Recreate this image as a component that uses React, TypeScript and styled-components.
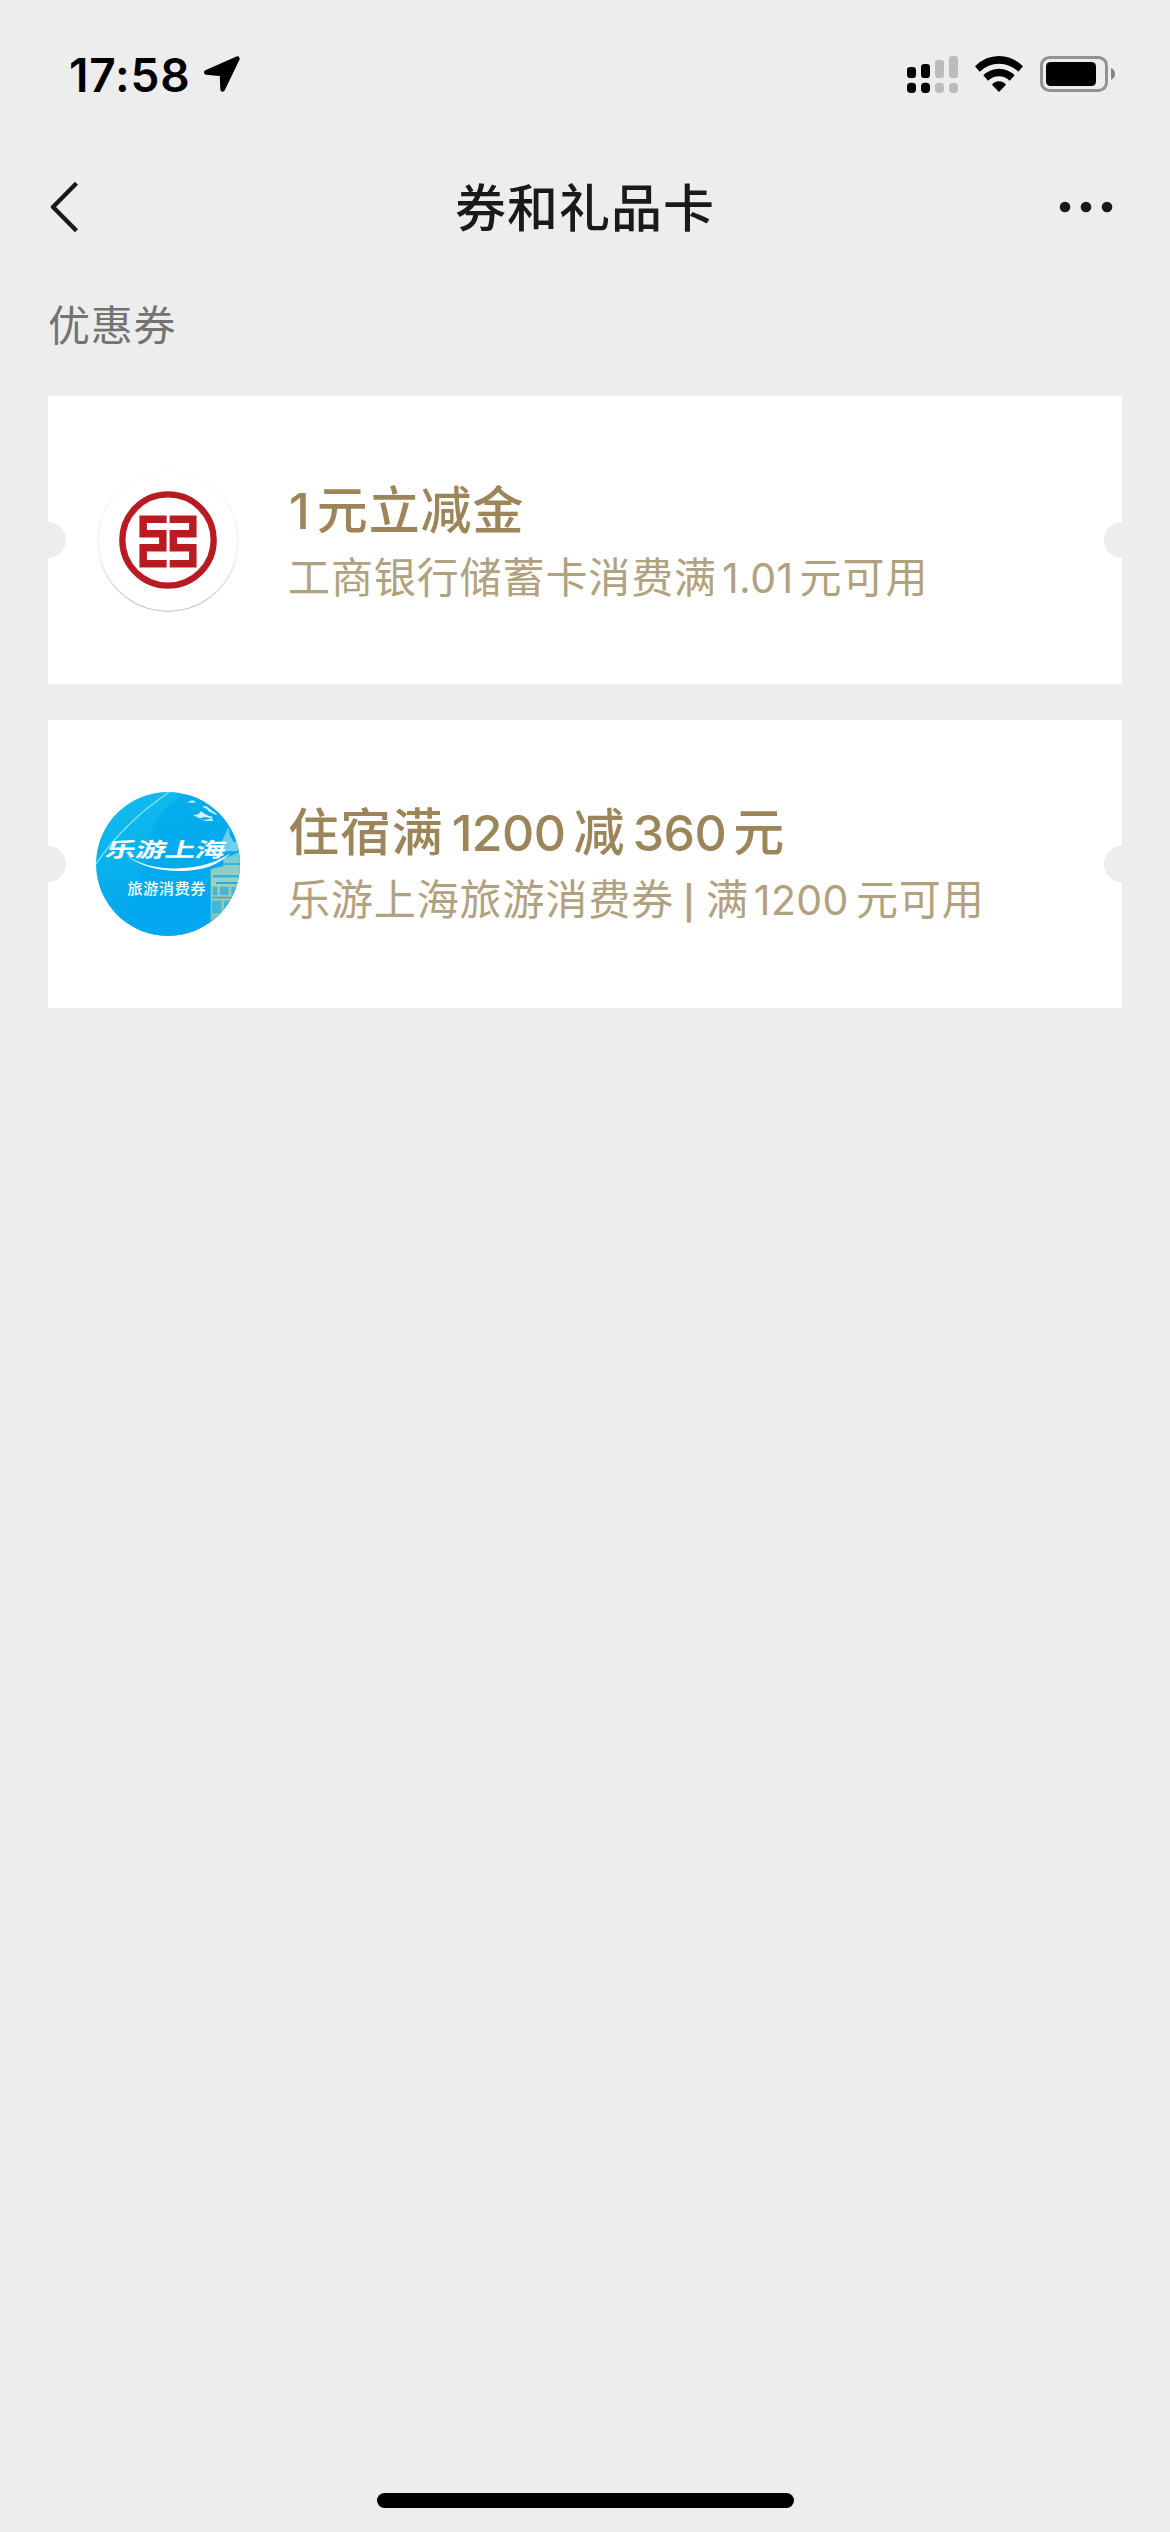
import React from "react";
import styled, { createGlobalStyle } from "styled-components";

const GlobalStyle = createGlobalStyle`
  body { margin: 0; background: #ededed; }
  * { box-sizing: border-box; }
`;

const Screen = styled.div`
  width: 1170px;
  height: 2532px;
  display: flex;
  flex-direction: column;
  overflow: hidden;
  background: #ededed;
  font-family: "Inter", "Noto Sans CJK SC", sans-serif;
`;

const StatusBar = styled.header`
  height: 148px;
  flex: none;
  display: flex;
  justify-content: space-between;
  align-items: center;
  padding: 0 55px 0 69px;
`;

const StatusGroup = styled.div<{ $gap: number }>`
  display: flex;
  align-items: center;
  gap: ${(p) => p.$gap}px;
`;

const Clock = styled.span`
  padding-top: 2px;
  font-size: 46px;
  line-height: 50px;
  font-weight: 600;
  letter-spacing: 0.8px;
  color: #000;
`;

const NavBar = styled.nav`
  height: 118px;
  flex: none;
  display: grid;
  grid-template-columns: 120px 1fr 120px;
  align-items: center;
`;

const NavButton = styled.button<{ $end?: boolean }>`
  height: 100%;
  display: flex;
  align-items: center;
  justify-content: ${(p) => (p.$end ? "flex-end" : "flex-start")};
  padding: 0 ${(p) => (p.$end ? 57 : 50)}px;
  border: 0;
  background: none;
`;

const NavTitle = styled.h1`
  margin: 0;
  padding-top: 3px;
  text-align: center;
  font-size: 51px;
  line-height: 72px;
  font-weight: 500;
  letter-spacing: 1px;
  color: #1a1a1a;
`;

const SectionLabel = styled.h2`
  margin: 0;
  height: 130px;
  padding: 30px 48px 0;
  font-size: 42px;
  line-height: 60px;
  font-weight: 400;
  letter-spacing: 0.7px;
  color: #737373;
`;

const CouponList = styled.main`
  flex: 1;
  display: flex;
  flex-direction: column;
  gap: 36px;
  padding: 0 48px;
`;

const Coupon = styled.article`
  height: 288px;
  display: flex;
  align-items: center;
  gap: 48px;
  padding-left: 48px;
  background:
    radial-gradient(circle at 0 50%, #ededed 17.6px, transparent 18.4px),
    radial-gradient(circle at 100% 50%, #ededed 17.6px, transparent 18.4px),
    #fff;
`;

const Badge = styled.div`
  width: 144px;
  height: 144px;
  flex: none;
  border-radius: 50%;
  overflow: hidden;
`;

const CouponText = styled.div`
  display: flex;
  flex-direction: column;
  padding-top: 3px;
  white-space: nowrap;
`;

const CouponTitle = styled.h3`
  margin: 0;
  font-size: 51px;
  line-height: 72px;
  font-weight: 500;
  letter-spacing: 0.9px;
  color: #9c8558;
`;

const CouponNote = styled.p`
  margin: 0;
  font-size: 42px;
  line-height: 62px;
  letter-spacing: 0.9px;
  color: #b2a17e;
`;

const Figure = styled.span<{ $size: number; $before?: number; $after?: number; $track?: number }>`
  font-size: ${(p) => p.$size}px;
  letter-spacing: ${(p) => p.$track ?? 0}px;
  margin-left: ${(p) => p.$before ?? 0}px;
  margin-right: ${(p) => p.$after ?? 0}px;
`;

const Divider = styled.span`
  margin: 0 11px 0 9px;
  font-size: 33px;
  font-weight: 600;
  letter-spacing: 0;
`;

const HomeArea = styled.footer`
  height: 39px;
  flex: none;
  display: flex;
  justify-content: center;
`;

const HomeIndicator = styled.div`
  width: 417px;
  height: 15px;
  border-radius: 8px;
  background: #000;
`;

const Art = styled.svg`
  display: block;
  flex: none;
`;

const LocationArrow = () => (
  <Art width="36" height="36" viewBox="0 0 108 108">
    <path
      d="M7 49 100 8 56 100 54 54Z"
      fill="#000"
      stroke="#000"
      strokeWidth="14"
      strokeLinejoin="round"
    />
  </Art>
);

const Signal = () => (
  <Art width="51" height="37" viewBox="81 78 153 111">
    {[111, 102, 90, 78].map((top, i) => (
      <g key={top} fill={i < 2 ? "#000" : "#bcbcbc"}>
        <rect x={81 + i * 42} y={top} width="27" height={144 - top} rx="10" />
        <rect x={81 + i * 42} y="158" width="27" height="31" rx="11" />
      </g>
    ))}
  </Art>
);

const Wifi = () => (
  <Art width="48" height="36" viewBox="285 75 144 108">
    <path d="M285 106Q316 75 357 75T429 106L415 122Q390 98 357 98T299 122Z" />
    <path d="M310 133Q330 113 357 113T404 133L389 149Q375 136 357 136T324 149Z" />
    <path d="M336 161Q345 151 357 151T378 161L357 183Z" />
  </Art>
);

const Battery = () => (
  <Art width="75" height="36" viewBox="480 78 225 108">
    <rect x="484.5" y="82.5" width="195" height="99" rx="24" fill="none" stroke="#929292" strokeWidth="9" />
    <rect x="498" y="96" width="150" height="72" rx="13" />
    <path d="M693 114Q705 119 705 132T693 149Z" fill="#858585" />
  </Art>
);

const BackIcon = () => (
  <Art width="30" height="52" viewBox="0 0 30 52">
    <path d="M26.5 2.3 3 26 26.5 49.7" fill="none" stroke="#1a1a1a" strokeWidth="4.4" strokeLinejoin="round" />
  </Art>
);

const MoreIcon = () => (
  <Art width="54" height="12" viewBox="0 0 54 12" fill="#1a1a1a">
    <circle cx="6" cy="6" r="5.3" />
    <circle cx="27" cy="6" r="5.3" />
    <circle cx="48" cy="6" r="5.3" />
  </Art>
);

const BankLogo = () => (
  <Art width="144" height="144" viewBox="168 84 432 432">
    <defs>
      <linearGradient id="rim" x1="0" y1="0" x2="0" y2="1">
        <stop offset="0" stopColor="#fbfbfb" />
        <stop offset=".6" stopColor="#f0f0f0" />
        <stop offset="1" stopColor="#c8c8c8" />
      </linearGradient>
    </defs>
    <circle cx="384" cy="304" r="210" fill="#fff" stroke="url(#rim)" strokeWidth="4" />
    <g fill="none" stroke="#b81c22">
      <circle cx="384" cy="300" r="137" strokeWidth="19" />
      <path
        d="M380 237.5H309.5V281H368.5V323.5H309.5V371H380M389 237.5H458.5V281H400V323.5H458.5V371H389"
        strokeWidth="22.5"
      />
    </g>
  </Art>
);

const TravelLogo = () => (
  <Art width="144" height="144" viewBox="48 36 432 432">
    <defs>
      <linearGradient id="sky" x1="0" y1="0" x2=".25" y2="1">
        <stop offset="0" stopColor="#10bdec" />
        <stop offset="1" stopColor="#02a5ef" />
      </linearGradient>
      <linearGradient id="tower" x1="0" y1="0" x2="0" y2="1">
        <stop offset="0" stopColor="#6ccbe0" />
        <stop offset=".4" stopColor="#a3cfb4" />
        <stop offset="1" stopColor="#74c0bd" />
      </linearGradient>
    </defs>
    <rect x="48" y="36" width="432" height="432" fill="url(#sky)" />
    <path d="M330 36Q215 90 208 190 206 250 155 340 130 390 150 468H480V36Z" fill="#02a8ee" opacity=".65" />
    <path d="M48 252Q130 130 268 36" fill="none" stroke="#8be0f7" strokeWidth="4" />
    <path
      d="M322 67l14-6 12 4-10 3zM366 80l12-2 8 6 20 16-18-4-8-10zM340 106l16-4 6-8 10 6 14 8 12 2-4 5-20-4-16 4zM386 88l20 10 6 8-14-6zM358 118l18 2 20-5 4 7-22 1z"
      fill="#d7f4fb"
    />
    <path d="M425 185L446 140 449 165 460 185H480V214H425Z" fill="#6dd0ea" />
    <path d="M430 236 480 216V450H392V268L430 258Z" fill="url(#tower)" />
    <g fill="#22afe2">
      <path d="M398 286H480V292H398zM408 306H480V312H408zM398 350H480V355H398zM430 250H480V254H430z" />
      <path d="M398 320H412V345H398zM420 320H446V345H420zM454 320H480V345H454zM396 362H424V400H396zM432 362H480V450H432z" opacity=".7" />
    </g>
    <path d="M138 226Q205 270 300 265 385 263 451 220 400 273 300 273 197 273 138 226Z" fill="#fff" />
    <text
      transform="translate(73 232) skewX(-14) scale(1.5 1)"
      fontFamily="Noto Sans CJK SC, sans-serif"
      fontSize="61"
      fontWeight="700"
      textLength="240"
      fill="#fff"
    >
      乐游上海
    </text>
    <text
      x="142"
      y="342"
      fontFamily="Noto Sans CJK SC, sans-serif"
      fontSize="46"
      fontWeight="500"
      textLength="235"
      fill="#fff"
    >
      旅游消费券
    </text>
  </Art>
);

export default function App() {
  return (
    <Screen>
      <GlobalStyle />
      <StatusBar>
        <StatusGroup $gap={14}>
          <Clock>17:58</Clock>
          <LocationArrow />
        </StatusGroup>
        <StatusGroup $gap={17}>
          <Signal />
          <Wifi />
          <Battery />
        </StatusGroup>
      </StatusBar>
      <NavBar>
        <NavButton aria-label="返回">
          <BackIcon />
        </NavButton>
        <NavTitle>券和礼品卡</NavTitle>
        <NavButton $end aria-label="更多">
          <MoreIcon />
        </NavButton>
      </NavBar>
      <SectionLabel>优惠券</SectionLabel>
      <CouponList>
        <Coupon>
          <Badge>
            <BankLogo />
          </Badge>
          <CouponText>
            <CouponTitle>
              <Figure $size={50} $before={1} $after={7}>1</Figure>
              元立减金
            </CouponTitle>
            <CouponNote>
              工商银行储蓄卡消费满
              <Figure $size={41} $before={5} $after={6} $track={0.4}>1.01</Figure>
              元可用
            </CouponNote>
          </CouponText>
        </Coupon>
        <Coupon>
          <Badge>
            <TravelLogo />
          </Badge>
          <CouponText>
            <CouponTitle>
              住宿满
              <Figure $size={50} $before={8} $after={8} $track={-0.6}>1200</Figure>
              减
              <Figure $size={50} $before={7.5} $after={7} $track={-0.6}>360</Figure>
              元
            </CouponTitle>
            <CouponNote>
              乐游上海旅游消费券
              <Divider>|</Divider>
              满
              <Figure $size={41} $before={5} $after={7} $track={0.4}>1200</Figure>
              元可用
            </CouponNote>
          </CouponText>
        </Coupon>
      </CouponList>
      <HomeArea>
        <HomeIndicator />
      </HomeArea>
    </Screen>
  );
}
